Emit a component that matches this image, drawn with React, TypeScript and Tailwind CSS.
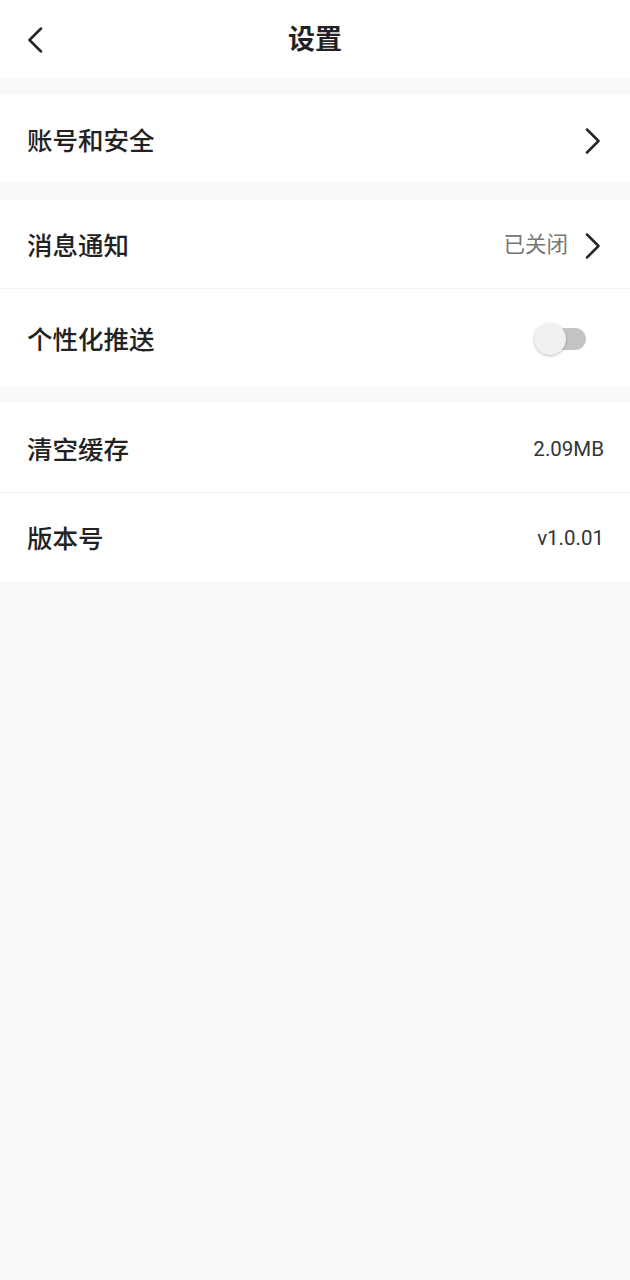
const font = { fontFamily: 'Roboto, "Noto Sans CJK SC", sans-serif' };

function Chevron({ left, className = "" }: { left?: boolean; className?: string }) {
	return (
		<svg width="16" height="26" viewBox="0 0 16 26" fill="none" className={className}>
			<path
				d={left ? "M14 1.5 L2.5 13 L14 24.5" : "M2 1.5 L13.5 13 L2 24.5"}
				stroke="#262626"
				strokeWidth="2.5"
				strokeLinecap="round"
				strokeLinejoin="round"
			/>
		</svg>
	);
}

function Row({
	label,
	right,
	border,
	h = "h-[89px]",
}: {
	label: string;
	right?: React.ReactNode;
	border?: boolean;
	h?: string;
}) {
	return (
		<div
			className={`flex items-center justify-between bg-white pl-[27px] pr-[29px] ${h} ${
				border ? "border-b border-[#f2f2f2]" : ""
			}`}
		>
			<span className="pt-[5px] text-[25.5px] font-medium text-[#222]">{label}</span>
			<div className="pt-[3px]">{right}</div>
		</div>
	);
}

export default function App() {
	return (
		<div className="min-h-[1280px] w-full bg-[#f9f9f9]" style={font}>
			{/* Header */}
			<div className="relative flex h-[78px] items-center justify-center bg-white">
				<Chevron left className="absolute left-[27px] top-[27px]" />
				<h1 className="pt-[3px] text-[27px] font-bold text-[#222]">设置</h1>
			</div>

			<div className="mt-[17px]">
				<Row label="账号和安全" h="h-[88px]" right={<Chevron />} />
			</div>

			<div className="mt-[17px]">
				<Row
					label="消息通知"
					border
					right={
						<div className="flex items-center gap-[17px]">
							<span className="text-[21.5px] text-[#777]">已关闭</span>
							<Chevron />
						</div>
					}
				/>
				<Row
					label="个性化推送"
					h="h-[97px]"
					right={
						<div className="relative mr-[15px] h-[22px] w-[36px]">
							<div className="absolute right-0 top-0 h-[22px] w-[32px] rounded-full bg-[#c4c4c4]" />
							<div className="absolute left-[-16px] top-[-5px] h-[32px] w-[32px] rounded-full bg-[#f0f0f0] shadow-[0_1px_3px_rgba(0,0,0,0.25)]" />
						</div>
					}
				/>
			</div>

			<div className="mt-[17px]">
				<Row
					label="清空缓存"
					border
					h="h-[90px]"
					right={<span className="mr-[-3px] text-[20.5px] text-[#333]">2.09MB</span>}
				/>
				<Row
					label="版本号"
					h="h-[88px]"
					right={<span className="mr-[-3px] text-[20.5px] text-[#333]">v1.0.01</span>}
				/>
			</div>
		</div>
	);
}
